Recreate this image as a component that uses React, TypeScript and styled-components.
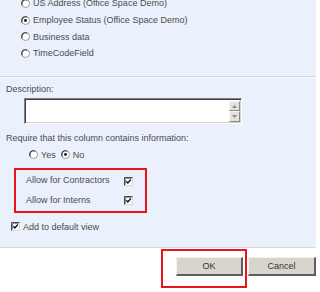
import React from "react";
import styled, { createGlobalStyle } from "styled-components";

const Global = createGlobalStyle`
  html, body { margin: 0; padding: 0; background: #ffffff; }
  body { font-family: Tahoma, "Liberation Sans", Arial, sans-serif; font-size: 9px; color: #4c4c4c; }
`;

const Page = styled.div`
  width: 320px;
  height: 292px;
  overflow: hidden;
  display: flex;
  flex-direction: column;
`;

const Panel = styled.div`
  width: 316px;
  height: 248px;
  box-sizing: border-box;
  background: #eaf1fc;
  border-bottom: 1px solid #d6d9dd;
  display: flex;
  flex-direction: column;
  overflow: hidden;
`;

const ChoiceList = styled.div`
  margin-top: -5px;
  padding-left: 21px;
  display: flex;
  flex-direction: column;
`;

const ChoiceRow = styled.label`
  height: 16.7px;
  display: flex;
  align-items: center;
  gap: 3px;
  white-space: nowrap;
`;

const Separator = styled.div`
  margin-top: 14px;
  height: 1px;
  background: #d2d8df;
  border-bottom: 1px solid #f4f7fb;
`;

const FieldLabel = styled.div<{ $top: number }>`
  margin-top: ${(p) => p.$top}px;
  padding-left: 6px;
  height: 12px;
  line-height: 12px;
  white-space: nowrap;
`;

const TextBox = styled.div`
  margin-top: 3px;
  margin-left: 24px;
  width: 218px;
  height: 26px;
  box-sizing: border-box;
  background: #ffffff;
  border-top: 1px solid #808080;
  border-left: 1px solid #808080;
  border-right: 1px solid #ffffff;
  border-bottom: 1px solid #ffffff;
  box-shadow: inset 1px 1px 0 #404040, inset -1px -1px 0 #d4d0c8;
  display: flex;
  justify-content: flex-end;
  padding: 2px 1px 1px 2px;
`;

const ScrollBar = styled.div`
  width: 11px;
  display: flex;
  flex-direction: column;
  justify-content: space-between;
  background: #f0efec;
`;

const ScrollButton = styled.div`
  width: 11px;
  height: 11px;
  box-sizing: border-box;
  background: #e3e2df;
  border-top: 1px solid #f6f6f4;
  border-left: 1px solid #f6f6f4;
  border-right: 1px solid #8a8a8a;
  border-bottom: 1px solid #8a8a8a;
  display: flex;
  align-items: center;
  justify-content: center;
`;

const InlineChoices = styled.div`
  margin-top: 5px;
  padding-left: 29px;
  height: 12px;
  display: flex;
  align-items: center;
`;

const InlineChoice = styled.label`
  display: flex;
  align-items: center;
  gap: 3px;
  margin-right: 5px;
`;

const Highlight = styled.div`
  margin-top: 7px;
  margin-left: 14px;
  width: 133px;
  box-sizing: border-box;
  border: 2px solid #e8161b;
  padding: 3px 0 4px 10px;
  display: grid;
  grid-template-columns: 98px auto;
  grid-auto-rows: 14px;
  row-gap: 6px;
  align-items: center;
`;

const CheckCell = styled.div<{ $dy: number }>`
  display: flex;
  align-items: center;
  transform: translateY(${(p) => p.$dy}px);
`;

const CheckRow = styled.label`
  margin-top: 8px;
  padding-left: 11px;
  height: 12px;
  display: flex;
  align-items: center;
  gap: 3px;
`;

const Footer = styled.div`
  display: flex;
  justify-content: flex-end;
  align-items: flex-start;
  padding: 1px 4px 0 0;
  width: 320px;
  box-sizing: border-box;
`;

const OkFrame = styled.div`
  width: 86px;
  height: 39px;
  box-sizing: border-box;
  border: 2px solid #e8161b;
  padding: 6px 2px 0 13px;
  display: flex;
  justify-content: flex-end;
`;

const Button = styled.div<{ $w: number }>`
  width: ${(p) => p.$w}px;
  height: 19px;
  box-sizing: border-box;
  background: #d8d5cd;
  border-top: 1px solid #f2f1ee;
  border-left: 1px solid #f2f1ee;
  border-right: 2px solid #5e5e5e;
  border-bottom: 2px solid #5e5e5e;
  color: #333333;
  font-size: 9px;
  display: flex;
  align-items: center;
  justify-content: center;
`;

const CancelWrap = styled.div`
  margin-top: 8px;
  margin-left: 1px;
`;

const Radio = ({ checked }: { checked?: boolean }) => (
  <svg width="9" height="9" viewBox="0 0 9 9" style={{ flex: "none" }}>
    <circle cx="4.5" cy="4.5" r="4" fill="#ffffff" stroke="#9a9a9a" strokeWidth="1" />
    <path d="M1.3 6.2 A3.6 3.6 0 0 1 6.2 1.3" fill="none" stroke="#3a3a3a" strokeWidth="1.2" />
    {checked && <circle cx="4.5" cy="4.5" r="1.4" fill="#111111" />}
  </svg>
);

const Check = ({ checked }: { checked?: boolean }) => (
  <svg width="9" height="9" viewBox="0 0 9 9" style={{ flex: "none" }}>
    <rect x="0.5" y="0.5" width="8" height="8" fill="#ffffff" stroke="#d8d8d8" />
    <path d="M0.5 8.5 V0.5 H8.5" fill="none" stroke="#4a4a4a" strokeWidth="1" />
    <path d="M1.5 7.5 V1.5 H7.5" fill="none" stroke="#8c8c8c" strokeWidth="1" />
    {checked && <path d="M2.3 4.3 L3.8 5.9 L6.9 2.6" fill="none" stroke="#111111" strokeWidth="1.4" />}
  </svg>
);

const Arrow = ({ up }: { up?: boolean }) => (
  <svg width="5" height="3" viewBox="0 0 5 3">
    <path d={up ? "M0 3 L2.5 0 L5 3 Z" : "M0 0 L2.5 3 L5 0 Z"} fill="#8a8a8a" />
  </svg>
);

const choices = [
  { label: "US Address (Office Space Demo)", checked: false },
  { label: "Employee Status (Office Space Demo)", checked: true },
  { label: "Business data", checked: false },
  { label: "TimeCodeField", checked: false },
];

export default function App() {
  return (
    <>
      <Global />
      <Page>
        <Panel>
          <ChoiceList>
            {choices.map((c) => (
              <ChoiceRow key={c.label}>
                <Radio checked={c.checked} />
                {c.label}
              </ChoiceRow>
            ))}
          </ChoiceList>
          <Separator />
          <FieldLabel $top={5}>Description:</FieldLabel>
          <TextBox>
            <ScrollBar>
              <ScrollButton>
                <Arrow up />
              </ScrollButton>
              <ScrollButton>
                <Arrow />
              </ScrollButton>
            </ScrollBar>
          </TextBox>
          <FieldLabel $top={8}>Require that this column contains information:</FieldLabel>
          <InlineChoices>
            <InlineChoice>
              <Radio />
              Yes
            </InlineChoice>
            <InlineChoice>
              <Radio checked />
              No
            </InlineChoice>
          </InlineChoices>
          <Highlight>
            <span>Allow for Contractors</span>
            <CheckCell $dy={2}>
              <Check checked />
            </CheckCell>
            <span>Allow for Interns</span>
            <CheckCell $dy={1}>
              <Check checked />
            </CheckCell>
          </Highlight>
          <CheckRow>
            <Check checked />
            Add to default view
          </CheckRow>
        </Panel>
        <Footer>
          <OkFrame>
            <Button $w={67}>OK</Button>
          </OkFrame>
          <CancelWrap>
            <Button $w={68}>Cancel</Button>
          </CancelWrap>
        </Footer>
      </Page>
    </>
  );
}
